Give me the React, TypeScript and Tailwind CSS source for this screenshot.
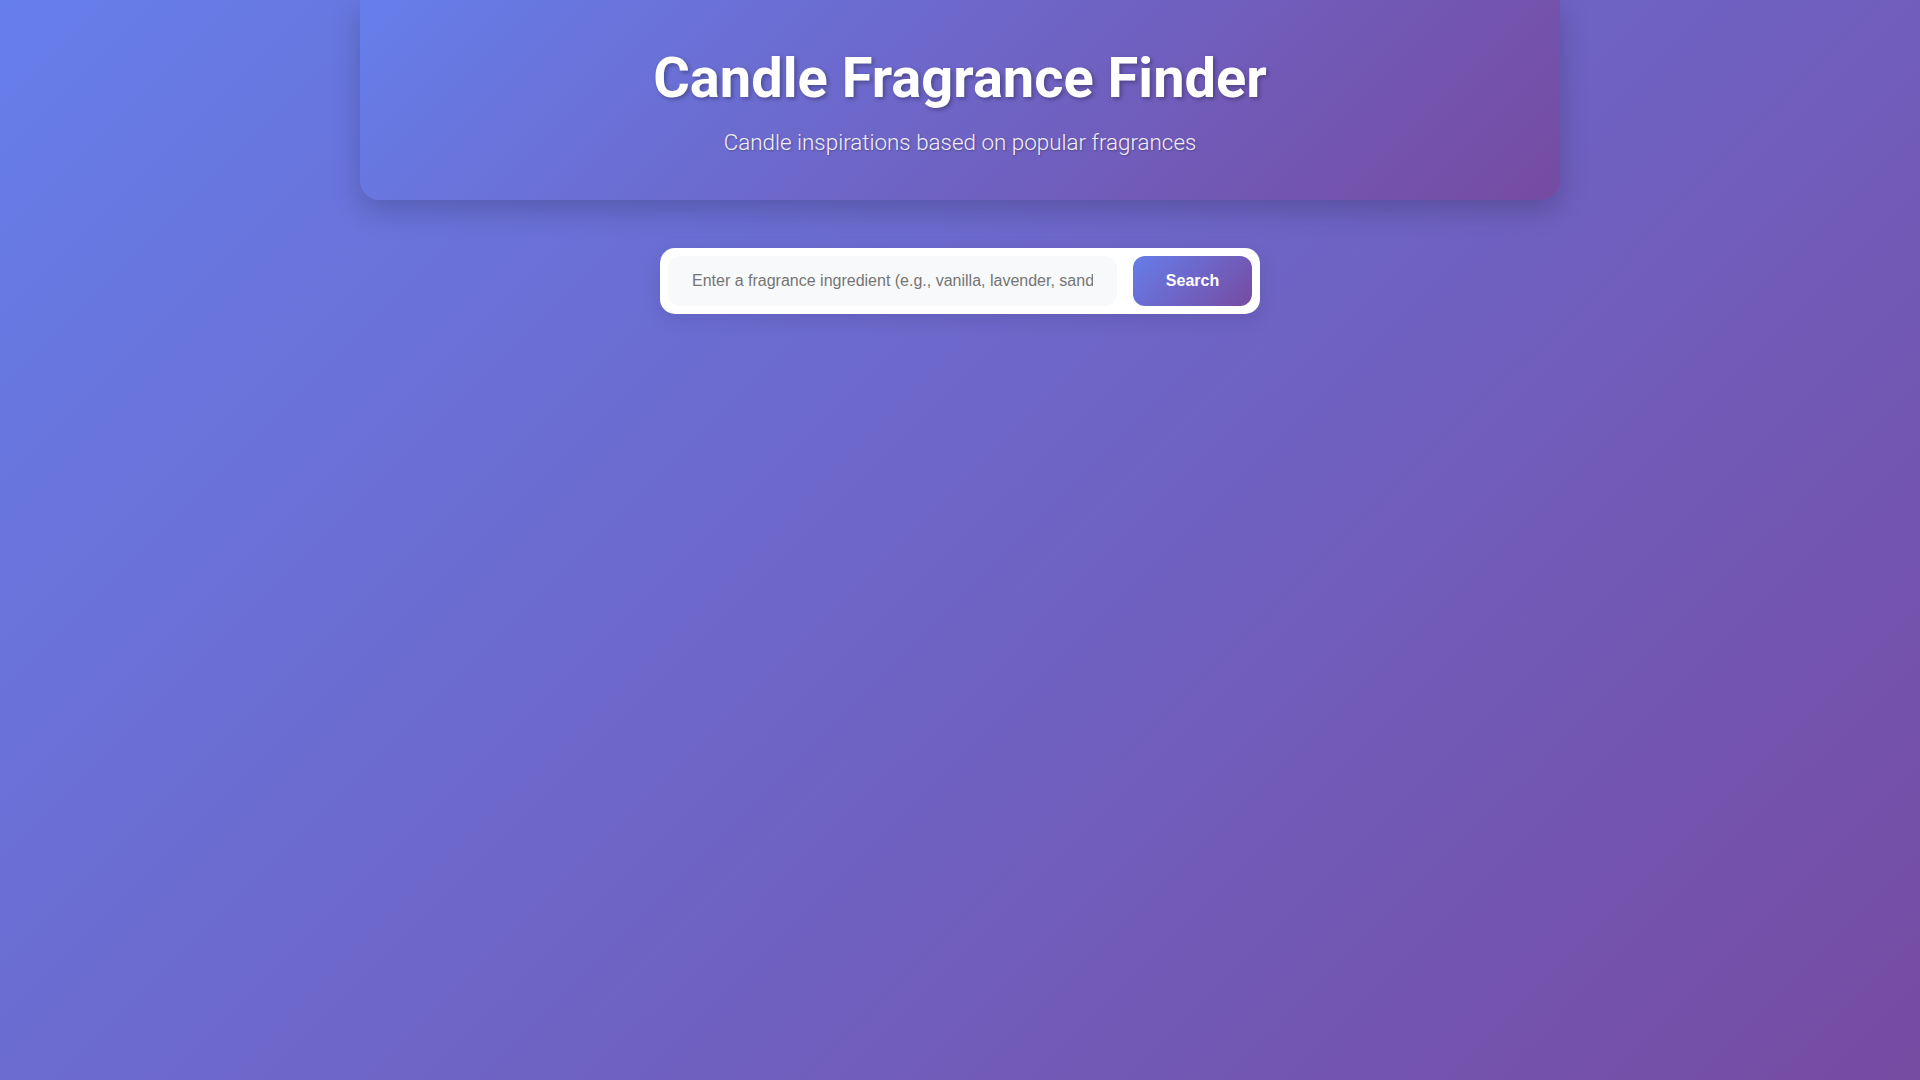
import React from "react";

export default function App() {
  return (
    <div className="min-h-screen w-full bg-[linear-gradient(135deg,#667eea_0%,#764ba2_100%)] font-['Roboto',sans-serif]">
      <div className="mx-auto w-[1200px]">
        <header className="flex h-[200px] flex-col items-center rounded-b-[20px] bg-[linear-gradient(135deg,#667eea_0%,#764ba2_100%)] pt-[45px] text-white shadow-[0_10px_30px_rgba(0,0,0,0.2)]">
          <h1 className="text-[56px] font-bold leading-[1.2] [text-shadow:2px_2px_4px_rgba(0,0,0,0.3)]">
            Candle Fragrance Finder
          </h1>
          <p className="mt-[17px] text-[22.4px] font-light leading-[1.17] opacity-90 [text-shadow:1px_1px_2px_rgba(0,0,0,0.3)]">
            Candle inspirations based on popular fragrances
          </p>
        </header>
      </div>
      <div className="mt-[48px] flex justify-center">
        <div className="flex w-[600px] gap-[16px] rounded-[15px] bg-white p-[8px] shadow-[0_5px_20px_rgba(0,0,0,0.1)]">
          <input
            type="text"
            placeholder="Enter a fragrance ingredient (e.g., vanilla, lavender, sandalwood)"
            className="h-[50px] min-w-0 flex-1 rounded-[12px] bg-[#f8f9fa] px-[24px] font-['Liberation_Sans',Arial,sans-serif] text-[16px] text-[#333] outline-none placeholder:text-[#757575]"
          />
          <button className="h-[50px] w-[119px] shrink-0 rounded-[12px] bg-[linear-gradient(135deg,#667eea_0%,#764ba2_100%)] font-['Liberation_Sans',Arial,sans-serif] text-[16px] font-bold text-white">
            Search
          </button>
        </div>
      </div>
    </div>
  );
}
